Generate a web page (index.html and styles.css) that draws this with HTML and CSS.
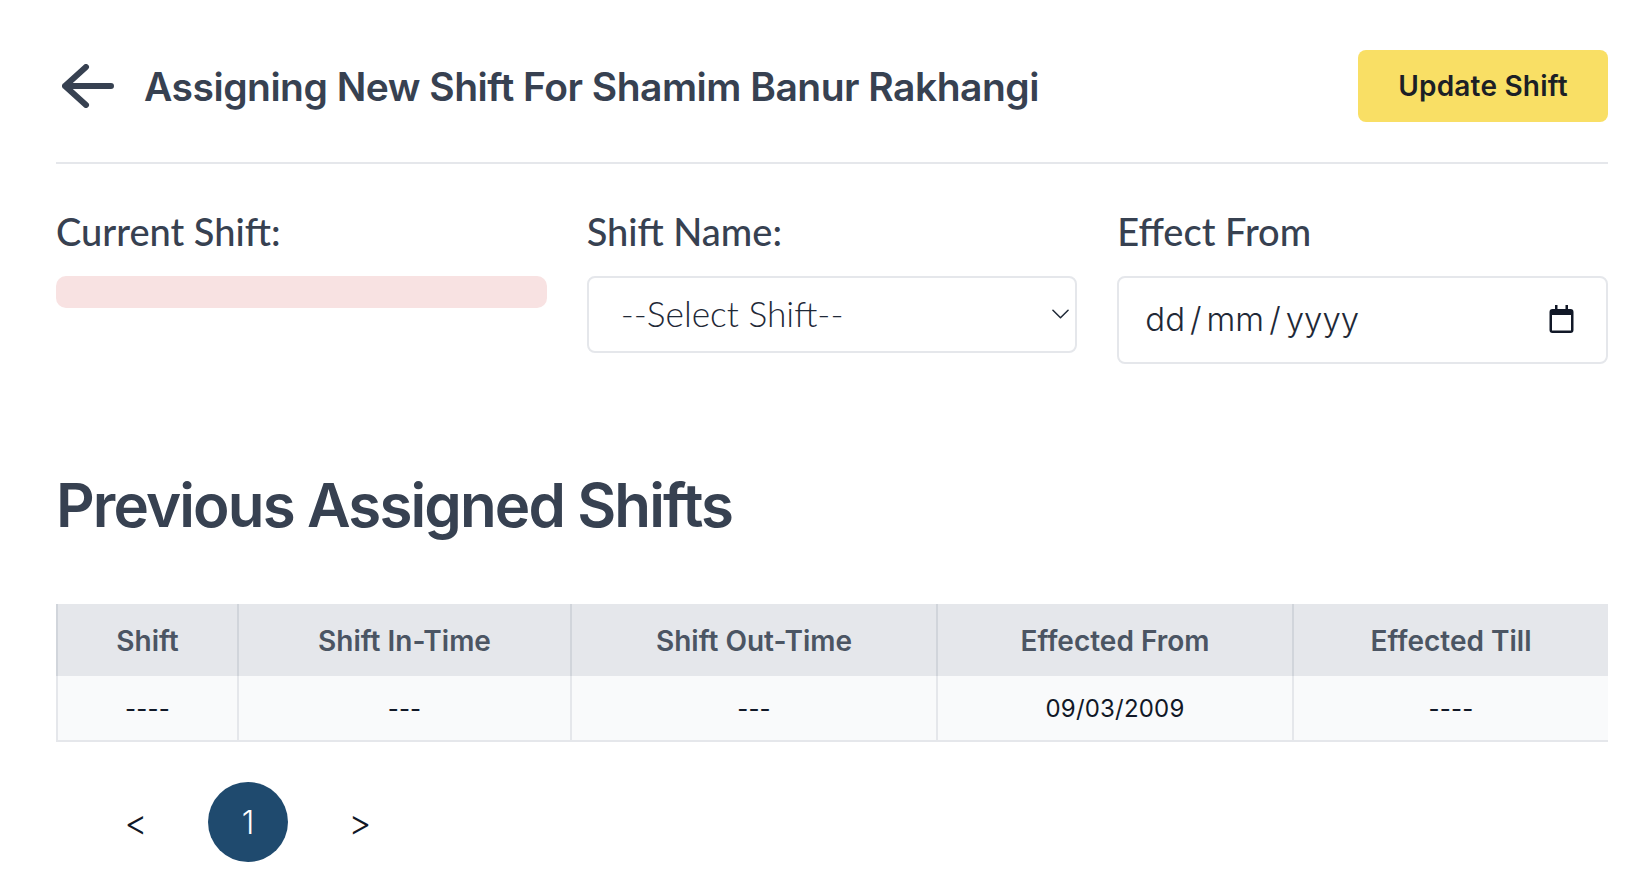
FILE: index.html
```html
<!DOCTYPE html>
<html lang="en">

<head>
    <meta charset="UTF-8">
    <meta name="viewport" content="width=device-width, initial-scale=1.0">
    <title>Assign Shift</title>
    <link rel="stylesheet" href="styles.css">
</head>

<body>
    <div class="container">
        <div class="top-bar">
            <div class="title-box">
                <svg class="back-icon" viewBox="0 0 52 44" fill="none" stroke="#374151" stroke-width="6" stroke-linecap="round" stroke-linejoin="round">
                    <path d="M24 3L3 22L24 41M3 22H49" />
                </svg>
                <h1>Assigning New Shift For Shamim Banur Rakhangi</h1>
            </div>
            <button class="update-btn">Update Shift</button>
        </div>

        <div class="form-grid">
            <div class="field">
                <label class="field-label">Current Shift:</label>
                <div class="current-shift"></div>
            </div>
            <div class="field">
                <label class="field-label" for="shift">Shift Name:</label>
                <div class="select-box">
                    <select class="shift-select" id="shift">
                        <option>--Select Shift--</option>
                    </select>
                    <svg class="select-caret" viewBox="0 0 18 10" fill="none" stroke="#1f2937" stroke-width="1.6" stroke-linecap="round" stroke-linejoin="round">
                        <path d="M1 1L9 9L17 1" />
                    </svg>
                </div>
            </div>
            <div class="field">
                <label class="field-label">Effect From</label>
                <div class="date-box">
                    <div class="date-text"><span>dd</span><span class="date-sep">/</span><span>mm</span><span class="date-sep">/</span><span>yyyy</span></div>
                    <svg class="calendar-icon" viewBox="0 0 25 28" fill="none">
                        <path d="M6 0H8.500V4H16.500V0H19V4H21.500A3 3 0 0 1 24.500 7V25A3 3 0 0 1 21.500 28H3.500A3 3 0 0 1 0.500 25V7A3 3 0 0 1 3.500 4H6Z" fill="#111827" />
                        <rect x="3" y="10" width="19" height="15.500" fill="#fff" />
                    </svg>
                </div>
            </div>
        </div>

        <h2>Previous Assigned Shifts</h2>

        <table class="shift-table">
            <thead>
                <tr>
                    <th class="col-shift">Shift</th>
                    <th class="col-in">Shift In-Time</th>
                    <th class="col-out">Shift Out-Time</th>
                    <th class="col-from">Effected From</th>
                    <th>Effected Till</th>
                </tr>
            </thead>
            <tbody>
                <tr>
                    <td>----</td>
                    <td>---</td>
                    <td>---</td>
                    <td>09/03/2009</td>
                    <td>----</td>
                </tr>
            </tbody>
        </table>

        <div class="pagination">
            <span class="page-item">&lt;</span>
            <span class="page-item active">1</span>
            <span class="page-item">&gt;</span>
        </div>
    </div>
</body>

</html>
```

FILE: styles.css
```css
* {
    padding: 0;
    margin: 0;
    box-sizing: border-box;
}

body {
    background-color: #fff;
    color: #374151;
    font-family: Inter, "Liberation Sans", sans-serif;
}

.container {
    padding: 50px 44px 0 56px;
}

.top-bar {
    display: flex;
    justify-content: space-between;
    align-items: center;
    padding-bottom: 40px;
    border-bottom: 2px solid #e5e7eb;
}

.title-box {
    display: flex;
    align-items: center;
    gap: 30px;
    padding-left: 6px;
}

.back-icon {
    width: 52px;
    height: 44px;
}

h1 {
    padding-top: 2px;
    font-size: 39px;
    line-height: 44px;
    font-weight: 600;
    letter-spacing: -0.5px;
}

.update-btn {
    width: 250px;
    height: 72px;
    border: none;
    border-radius: 8px;
    background-color: #f9df65;
    color: #1c1f26;
    font-family: inherit;
    font-size: 28px;
    font-weight: 600;
    letter-spacing: 0.2px;
}

.form-grid {
    display: grid;
    grid-template-columns: repeat(3, 1fr);
    gap: 40px;
    padding-top: 45px;
}

.field-label {
    display: block;
    font-family: Lato, sans-serif;
    font-size: 38px;
    font-weight: 500;
    line-height: 44px;
    margin-bottom: 23px;
}

.current-shift {
    height: 32px;
    border-radius: 10px;
    background-color: #f8e2e2;
}

.select-box {
    position: relative;
}

.shift-select {
    display: block;
    width: 100%;
    height: 77px;
    padding-left: 32px;
    padding-bottom: 3px;
    border: 2px solid #e5e7eb;
    border-radius: 8px;
    background-color: #fff;
    color: #1f2937;
    font-family: Lato, sans-serif;
    font-size: 35.300px;
    font-weight: 300;
    appearance: none;
}

.select-caret {
    position: absolute;
    right: 8px;
    top: 33px;
    width: 17px;
    height: 10px;
}

.date-box {
    display: flex;
    align-items: center;
    justify-content: space-between;
    height: 88px;
    padding: 0 32px 0 26px;
    border: 2px solid #e5e7eb;
    border-radius: 8px;
}

.date-text {
    display: flex;
    margin-top: -2px;
    color: #1f2937;
    font-size: 33px;
    font-weight: 300;
}

.date-sep {
    margin: 0 5px;
}

.calendar-icon {
    width: 25px;
    height: 28px;
    margin-top: -2px;
}

h2 {
    margin-top: 111px;
    font-size: 60px;
    line-height: 60px;
    font-weight: 600;
    letter-spacing: -1.875px;
}

.shift-table {
    width: 100%;
    margin-top: 69px;
    border-collapse: collapse;
    table-layout: fixed;
    border-bottom: 2px solid #e5e7eb;
}

.col-shift {
    width: 181px;
}

.col-in {
    width: 333px;
}

.col-out {
    width: 366px;
}

.col-from {
    width: 356px;
}

th {
    height: 72px;
    padding-top: 2px;
    background-color: #e5e7eb;
    border-left: 2px solid #d1d5db;
    color: #4b5563;
    font-size: 28px;
    font-weight: 600;
}

td {
    height: 65px;
    background-color: #f9fafb;
    border-left: 2px solid #e5e7eb;
    color: #111827;
    font-size: 24px;
    letter-spacing: 0.2px;
    text-align: center;
}

.pagination {
    display: flex;
    gap: 32px;
    margin-top: 40px;
    padding-left: 40px;
}

.page-item {
    display: flex;
    justify-content: center;
    align-items: center;
    width: 80px;
    height: 80px;
    border-radius: 50%;
    color: #111827;
    font-size: 35px;
    font-weight: 300;
}

.page-item.active {
    background-color: #1f4a6e;
    color: #fff;
    font-size: 32px;
}
```
